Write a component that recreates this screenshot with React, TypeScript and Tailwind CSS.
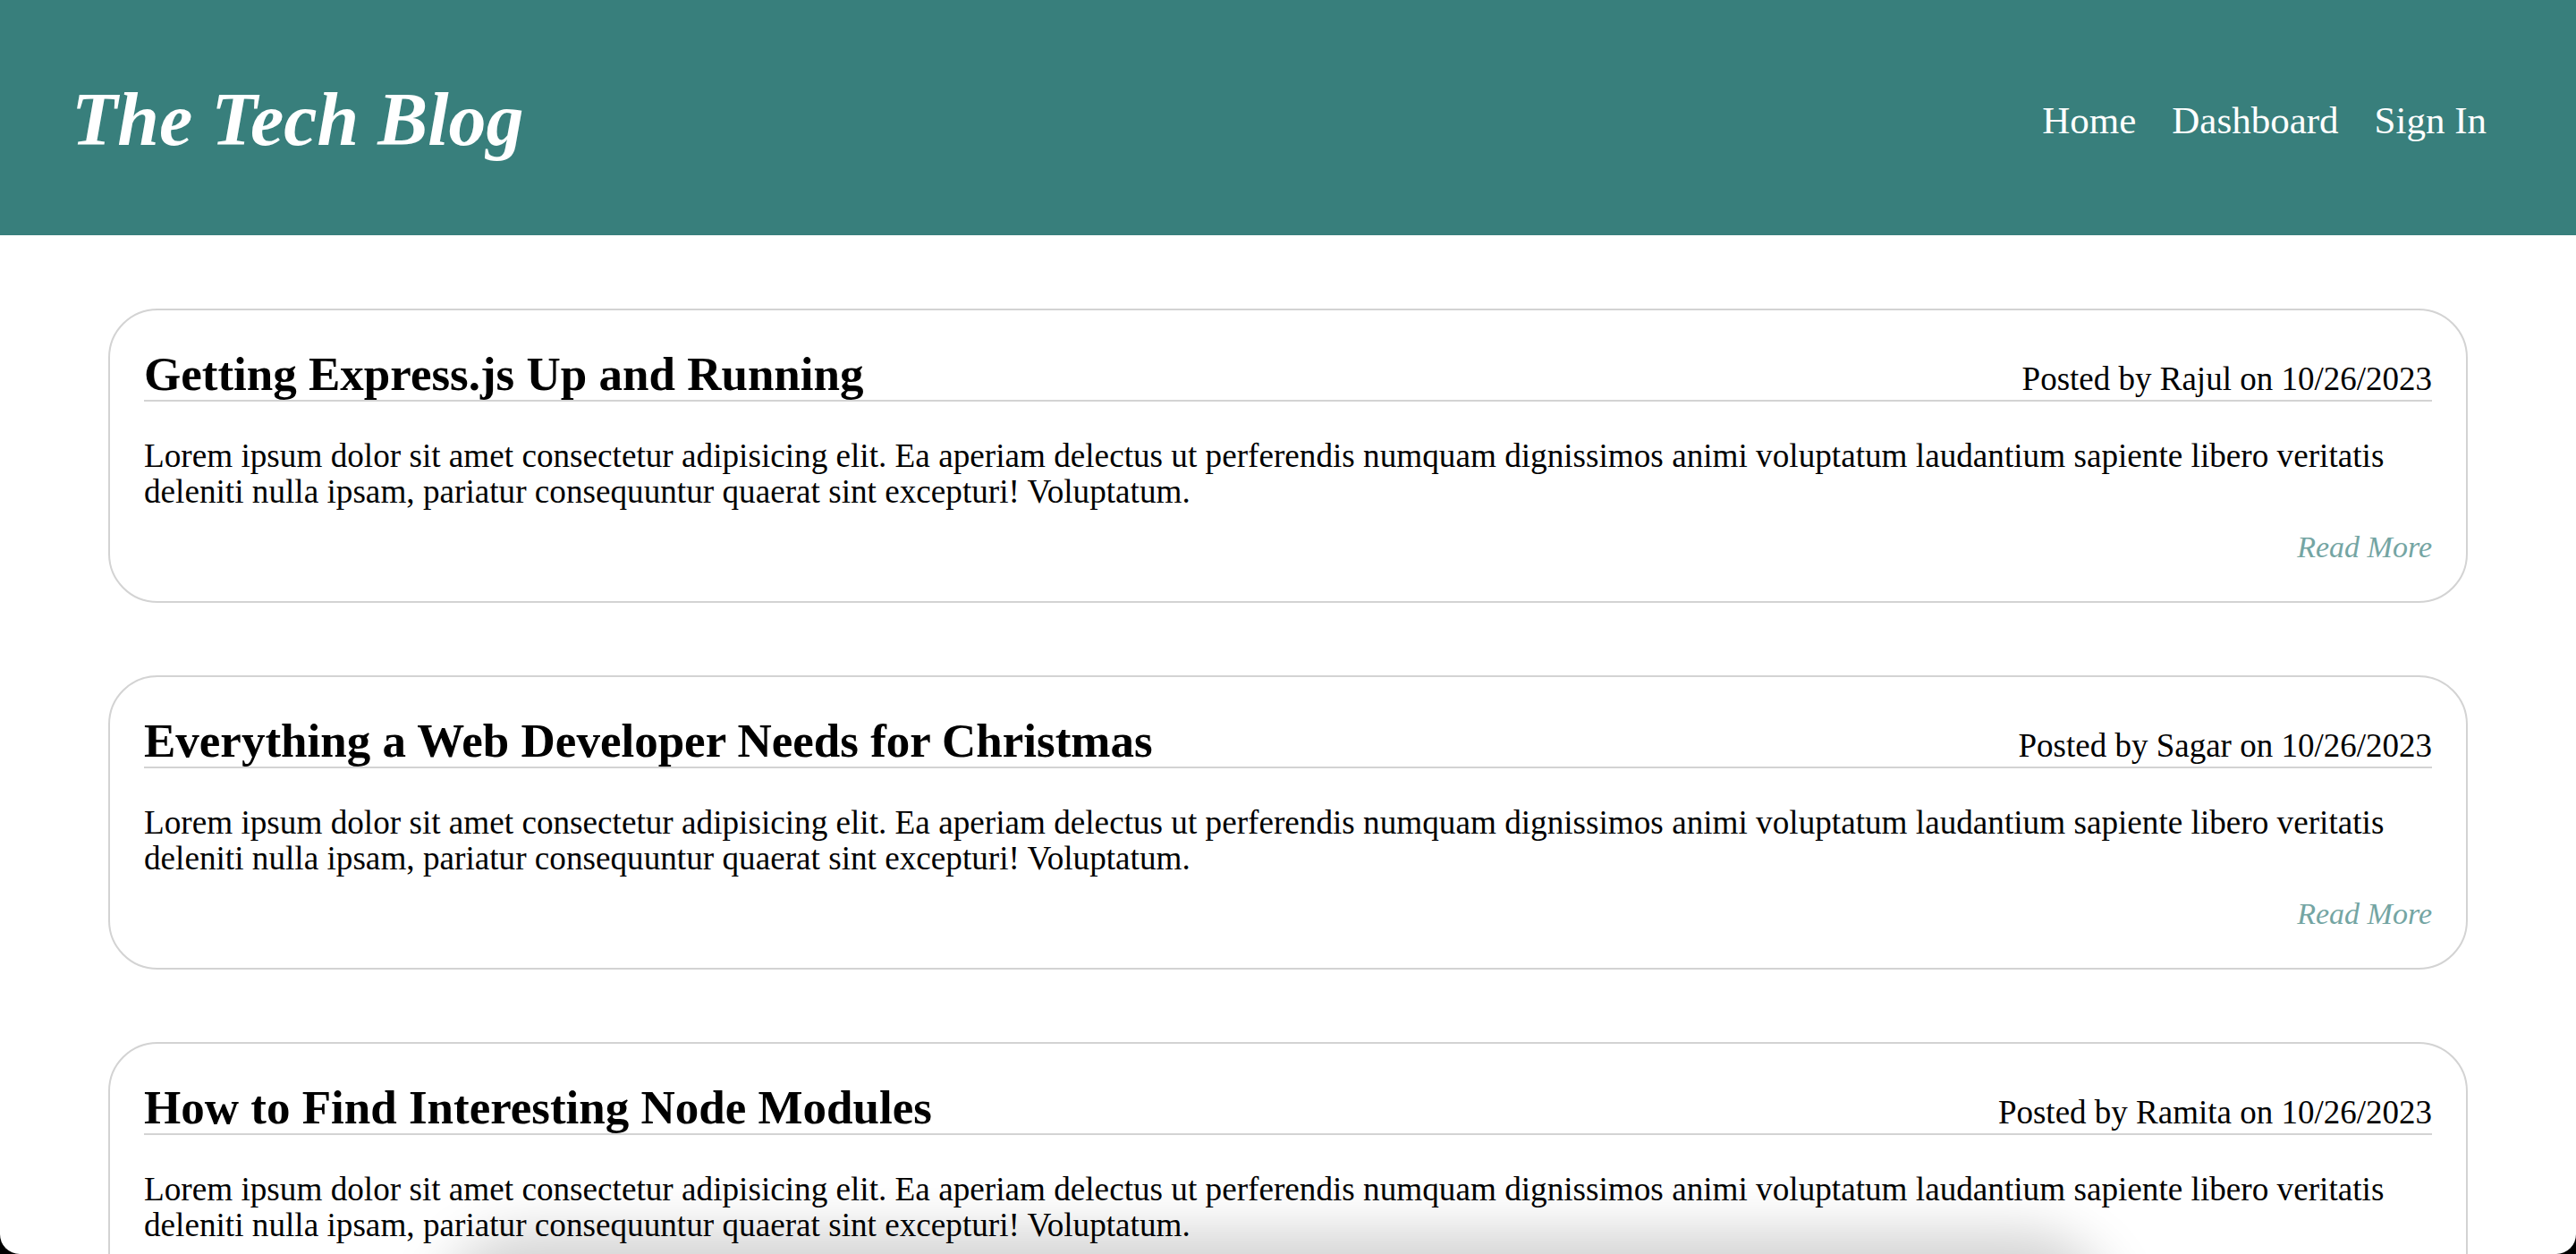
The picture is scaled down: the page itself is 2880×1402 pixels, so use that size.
import React from 'react';

type Post = {
  title: string;
  author: string;
  date: string;
  body: string;
};

const lorem =
  'Lorem ipsum dolor sit amet consectetur adipisicing elit. Ea aperiam delectus ut perferendis numquam dignissimos animi voluptatum laudantium sapiente libero veritatis deleniti nulla ipsam, pariatur consequuntur quaerat sint excepturi! Voluptatum.';

const posts: Post[] = [
  { title: 'Getting Express.js Up and Running', author: 'Rajul', date: '10/26/2023', body: lorem },
  { title: 'Everything a Web Developer Needs for Christmas', author: 'Sagar', date: '10/26/2023', body: lorem },
  { title: 'How to Find Interesting Node Modules', author: 'Ramita', date: '10/26/2023', body: lorem },
];

function PostCard({ post }: { post: Post }) {
  return (
    <article className="mx-[121px] rounded-[55px] border-2 border-[#d3d3d3] bg-white px-[38px] pt-[45px] pb-[40px]">
      {/* Title row */}
      <div className="flex items-baseline justify-between border-b-2 border-[#d3d3d3] pb-[2px]">
        <h2 className="text-[53px] font-bold leading-none text-black">{post.title}</h2>
        <p className="text-[37px] leading-[40px] text-black">
          Posted by {post.author} on {post.date}
        </p>
      </div>

      <p className="mt-[41px] text-[37.2px] leading-[40px] text-black">{post.body}</p>

      <div className="mt-[22px] flex justify-end">
        <a href="#" className="text-[34px] italic leading-[40px] text-[#74a5a3]">
          Read More
        </a>
      </div>
    </article>
  );
}

export default function App() {
  return (
    <div
      className="relative min-h-screen bg-white"
      style={{ fontFamily: '"Liberation Serif", "DejaVu Serif", serif' }}
    >
      {/* Header */}
      <header className="flex h-[263px] items-center justify-between bg-[#387f7c] pt-[5px] pl-[80px] pr-[100px]">
        <h1 className="text-[84px] font-bold italic leading-none text-white">The Tech Blog</h1>
        <nav className="flex items-center gap-[40px] text-[43px] leading-none text-white">
          <a href="#">Home</a>
          <a href="#">Dashboard</a>
          <a href="#">Sign In</a>
        </nav>
      </header>

      {/* Posts */}
      <main className="flex flex-col gap-[81px] pt-[82px] pb-[82px]">
        {posts.map((post) => (
          <PostCard key={post.title} post={post} />
        ))}
      </main>

      {/* window chrome: soft shadow at the bottom edge and rounded corners */}
      <div className="pointer-events-none fixed bottom-[-90px] left-[510px] right-[540px] h-[90px] rounded-t-[80px] bg-[#a0a0a0] shadow-[0_0_60px_25px_rgba(0,0,0,0.18)]" />
      <div className="pointer-events-none fixed inset-0 rounded-b-[22px] shadow-[0_0_0_60px_#000]" />
    </div>
  );
}
